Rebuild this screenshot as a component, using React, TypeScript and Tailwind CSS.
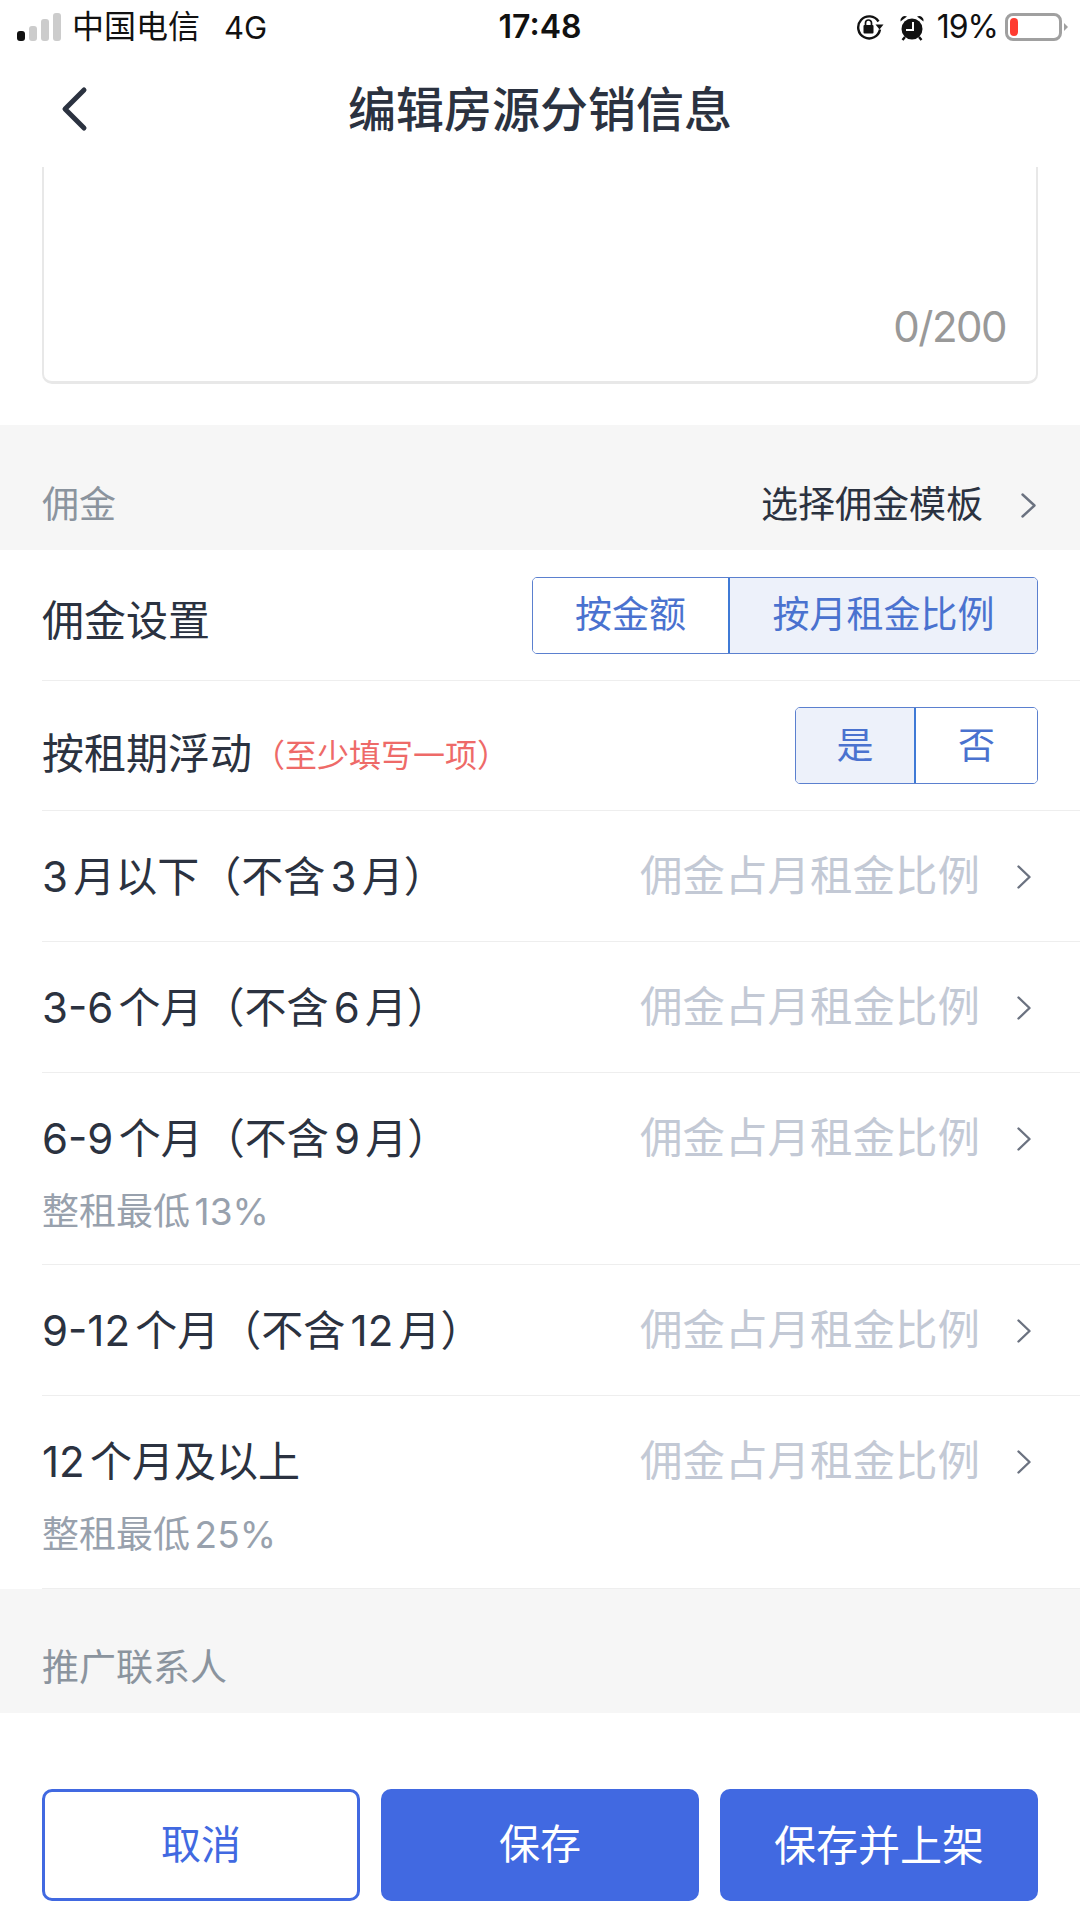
const font = { fontFamily: '"Inter", "Noto Sans CJK SC", sans-serif' };

type Term = { label: string; hint?: string; height: string };

const terms: Term[] = [
  { label: "3月以下（不含3月）", height: "h-[131px]" },
  { label: "3-6个月（不含6月）", height: "h-[131px]" },
  { label: "6-9个月（不含9月）", hint: "整租最低13%", height: "h-[192px]" },
  { label: "9-12个月（不含12月）", height: "h-[131px]" },
  { label: "12个月及以上", hint: "整租最低25%", height: "h-[193px]" },
];

function Chevron({ className, w, h }: { className: string; w: number; h: number }) {
  return (
    <svg className={className} width={w} height={h} viewBox={`0 0 ${w} ${h}`} fill="none">
      <path
        d={`M1.5 1.5 L${w - 1.5} ${h / 2} L1.5 ${h - 1.5}`}
        stroke="currentColor"
        strokeWidth="2.4"
        strokeLinecap="round"
        strokeLinejoin="round"
      />
    </svg>
  );
}

function StatusBar() {
  return (
    <div className="h-[54px] flex items-center justify-between pl-[17px] pr-[12px] text-[#111] relative">
      <div className="flex items-center">
        <div className="flex items-end gap-[4px] h-[28px]">
          <div className="w-[8px] h-[10px] rounded-[3px] bg-[#111]" />
          <div className="w-[8px] h-[15px] rounded-[3px] bg-[#cccccc]" />
          <div className="w-[8px] h-[22px] rounded-[3px] bg-[#cccccc]" />
          <div className="w-[8px] h-[28px] rounded-[3px] bg-[#cccccc]" />
        </div>
        <span className="ml-[11px] text-[32px] leading-none">中国电信</span>
        <span className="ml-[24px] text-[31px] leading-none">4G</span>
      </div>
      <span className="absolute left-0 right-0 text-center text-[32px] font-semibold leading-none">17:48</span>
      <div className="flex items-center">
        {/* rotation lock */}
        <svg width="28" height="26" viewBox="0 0 28 26" fill="none">
          <path d="M24 15.5A11 11 0 1 1 22.5 7.5" stroke="#111" strokeWidth="2.4" />
          <path d="M19.5 10.5h8l-4 5z" fill="#111" />
          <rect x="7.5" y="11" width="10" height="8.5" rx="1" fill="#111" />
          <path d="M9.5 11V9a3 3 0 0 1 6 0v2" stroke="#111" strokeWidth="1.7" />
        </svg>
        {/* alarm */}
        <svg className="ml-[15px]" width="26" height="27" viewBox="0 0 26 27">
          <circle cx="13" cy="15" r="10.5" fill="#111" />
          <path d="M1.5 7.5a4.5 4.5 0 0 1 6.5-5z" fill="#111" />
          <path d="M24.5 7.5a4.5 4.5 0 0 0-6.5-5z" fill="#111" />
          <path d="M6 23l-2.5 3M20 23l2.5 3" stroke="#111" strokeWidth="2.4" />
          <path d="M14 8v8H7" stroke="#fff" strokeWidth="2" fill="none" />
        </svg>
        <span className="ml-[12px] text-[32px] leading-none tracking-[-1px]">19%</span>
        <div className="ml-[7px] w-[57px] h-[28px] rounded-[8px] border-[3px] border-[#a0a0a0] pl-[2px] py-[2px]">
          <div className="w-[8px] h-full rounded-[4px] bg-[#ff3b30]" />
        </div>
        <div className="ml-[2px] w-0 h-0 border-y-[4px] border-y-transparent border-l-[4px] border-l-[#a0a0a0]" />
      </div>
    </div>
  );
}

function NavBar() {
  return (
    <div className="h-[113px] pb-[2px] flex items-center relative">
      <svg className="absolute left-[59px] top-[32px]" width="30" height="46" viewBox="0 0 30 46" fill="none">
        <path d="M25 4 6 23l19 19" stroke="#2b3240" strokeWidth="5" strokeLinecap="round" strokeLinejoin="round" />
      </svg>
      <h1 className="w-full text-center text-[48px] font-medium text-[#2b3240] leading-none">编辑房源分销信息</h1>
    </div>
  );
}

function Segment({ options, active, widths }: { options: string[]; active: number; widths: string[] }) {
  return (
    <div className="flex h-[77px] rounded-[5px] border border-[#5b80cf] overflow-hidden">
      {options.map((o, i) => (
        <div
          key={o}
          className={`${widths[i]} ${i === 0 ? "border-r-2 border-[#3f7ad6]" : ""} ${
            i === active ? "bg-[#edf1fa]" : "bg-white"
          } flex items-center justify-center text-[37px] text-[#4a72cf]`}
        >
          {o}
        </div>
      ))}
    </div>
  );
}

function SectionHead({ title, right, height }: { title: string; right?: string; height: string }) {
  return (
    <div className={`${height} bg-[#f6f6f6] flex items-end justify-between pl-[42px] pr-[42px] pb-[20px]`}>
      <span className="text-[37px] leading-[50px] text-[#8b949e]">{title}</span>
      {right && (
        <span className="flex items-center text-[37px] leading-[50px] text-[#2b3240]">
          {right}
          <Chevron className="ml-[38px] mr-[2px] text-[#6b7280]" w={15} h={25} />
        </span>
      )}
    </div>
  );
}

function TermRow({ label, hint, height }: Term) {
  return (
    <div className={`ml-[42px] pr-[42px] border-b border-[#eeeeee] ${height}`}>
      <div className="h-[131px] flex items-center justify-between">
        <span className="text-[42px] leading-none text-[#2b3240]">{label}</span>
        <span className="flex items-center text-[42.5px] leading-none text-[#c3c9d5]">
          佣金占月租金比例
          <Chevron className="ml-[37px] mr-[7px] text-[#6b7280]" w={14} h={24} />
        </span>
      </div>
      {hint && <div className="-mt-[12px] text-[37px] leading-[40px] text-[#98a1ad]">{hint}</div>}
    </div>
  );
}

export default function App() {
  return (
    <div className="w-[1080px] h-[1920px] bg-white flex flex-col overflow-hidden [text-autospace:normal]" style={font}>
      <StatusBar />
      <NavBar />

      {/* Remark box, scrolled under the nav bar */}
      <div className="mx-[42px] h-[217px] border-x-2 border-b-[3px] border-[#e8e8e8] rounded-b-[10px] flex items-end justify-end pr-[30px] pb-[33px]">
        <span className="text-[42px] leading-none tracking-[-1.5px] text-[#999999]">0/200</span>
      </div>
      <div className="h-[41px] shrink-0" />

      <SectionHead title="佣金" right="选择佣金模板" height="h-[125px]" />

      <div className="ml-[42px] pr-[42px] h-[131px] border-b border-[#eeeeee] flex items-center justify-between">
        <span className="pt-[10px] text-[42px] text-[#2b3240]">佣金设置</span>
        <Segment options={["按金额", "按月租金比例"]} active={1} widths={["w-[197px]", "w-[307px]"]} />
      </div>

      <div className="ml-[42px] pr-[42px] h-[130px] border-b border-[#eeeeee] flex items-center justify-between">
        <span className="pt-[16px] flex items-center">
          <span className="text-[42px] text-[#2b3240]">按租期浮动</span>
          <span className="ml-[1px] pt-[4px] text-[32px] text-[#ee6a68]">（至少填写一项）</span>
        </span>
        <Segment options={["是", "否"]} active={0} widths={["w-[120px]", "w-[121px]"]} />
      </div>

      {terms.map((t) => (
        <TermRow key={t.label} {...t} />
      ))}

      <SectionHead title="推广联系人" height="h-[124px]" />

      <div className="mt-[76px] px-[42px] flex gap-[21px]">
        <button className="w-[318px] h-[112px] rounded-[10px] border-[3px] border-[#4169e1] bg-white text-[40px] text-[#4169e1]">
          取消
        </button>
        <button className="w-[318px] h-[112px] rounded-[10px] bg-[#4169e1] text-[41px] text-white">保存</button>
        <button className="w-[318px] h-[112px] rounded-[10px] bg-[#4169e1] text-[42px] text-white">保存并上架</button>
      </div>
    </div>
  );
}
